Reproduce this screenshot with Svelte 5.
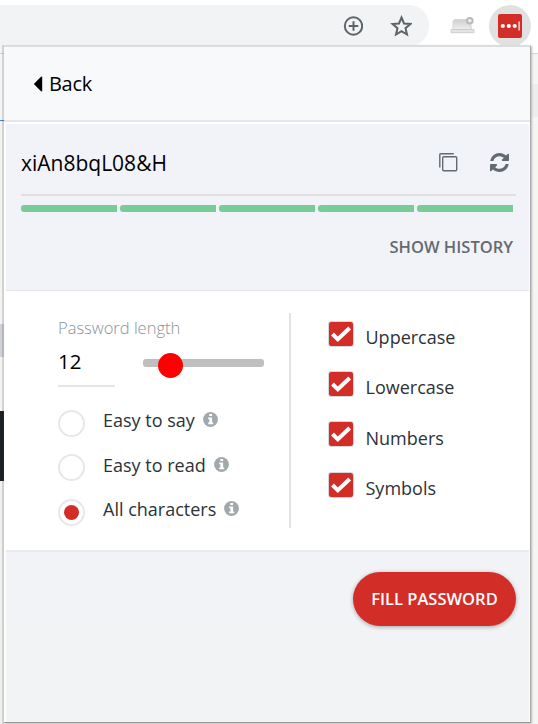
<script>
  const strength = [1, 2, 3, 4, 5];
  const modes = [
    { label: 'Easy to say', width: 92 },
    { label: 'Easy to read', width: 103 },
    { label: 'All characters', width: 113 }
  ];
  const sets = ['Uppercase', 'Lowercase', 'Numbers', 'Symbols'];
  let mode = $state('All characters');
  let enabled = $state([true, true, true, true]);
</script>

<div class="page">
  <div class="toolbar">
    <div class="address">
      <svg class="plus" width="20" height="20" viewBox="0 0 20 20" fill="none" stroke="#5f6368" stroke-width="2"><circle cx="10.500" cy="10" r="8.700"/><path d="M10.500 5.200v9.600M5.700 10h9.600"/></svg>
      <svg class="star" width="22" height="22" viewBox="0 0 22 22" fill="none" stroke="#5f6368" stroke-width="2"><path d="M11.500 2.500l2.500 6 6.400.5-4.900 4.200 1.500 6.300-5.500-3.400L6 19.500l1.500-6.300L2.600 9l6.400-.5z"/></svg>
    </div>
    <svg class="laptop" width="25" height="20" viewBox="0 0 25 20">
      <defs><linearGradient id="lid" x2="0" y2="1"><stop stop-color="#cfcfcf"/><stop offset="1" stop-color="#eee"/></linearGradient></defs>
      <path d="M4.500 3.500h15.500l1.500 10H3V5z" fill="url(#lid)" stroke="#d6d6d6"/>
      <path d="M1 13.500h23v3.200H1z" fill="#e4e4e4" stroke="#c8c8c8" stroke-width=".8"/>
      <circle cx="19.800" cy="4.800" r="2.800" fill="#eee" stroke="#b9b9b9" stroke-width="2"/>
    </svg>
    <div class="extension">
      <svg width="24" height="24" viewBox="0 0 24 24"><rect width="24" height="24" rx="2" fill="#d32d27"/><g fill="#fff"><circle cx="4.800" cy="12" r="2.100"/><circle cx="10.800" cy="12" r="2.100"/><circle cx="16.700" cy="12" r="2.100"/><rect x="20.500" y="7.500" width="1.200" height="9"/></g></svg>
    </div>
  </div>
  <div class="below">
    <div class="left"></div>
    <div class="popup">
      <header>
        <svg width="9" height="16" viewBox="0 0 9 16"><path d="M8.200 .6v14.800L7 15.300.3 8.500v-1L7 .7z" fill="#000"/></svg>
        <span>Back</span>
      </header>
      <section class="generator">
        <div class="password">
          <span class="value">xiAn8bqL08&amp;H</span>
          <svg class="copy" width="19" height="19" viewBox="0 0 19 19" fill="none" stroke="#626b70" stroke-width="1.400"><rect x="3.700" y="3.700" width="14" height="14" rx="1"/><path d="M.8 14.500V1.600Q.8.8 1.600.8h13.200"/></svg>
          <svg class="refresh" width="19" height="19" viewBox="0 0 1536 1536" fill="#626b70"><path d="M1511 928q0 5-1 7-64 268-268 434.500T764 1536q-146 0-282.500-55T238 1324l-129 129q-19 19-45 19t-45-19-19-45V960q0-26 19-45t45-19h448q26 0 45 19t19 45-19 45l-137 137q71 66 161 102t187 36q134 0 250-65t186-179q11-17 53-117 8-23 30-23h192q13 0 22.500 9.500t9.500 22.500zM1536 128v448q0 26-19 45t-45 19h-448q-26 0-45-19t-19-45 19-45l138-138Q969 256 768 256q-134 0-250 65T332 500q-11 17-53 117-8 23-30 23H50q-13 0-22.500-9.500T18 608v-7q65-268 270-434.500T768 0q146 0 284 55.500T1297 212l130-129q19-19 45-19t45 19 19 45z"/></svg>
        </div>
        <div class="strength">{#each strength as n (n)}<i></i>{/each}</div>
        <div class="history">SHOW HISTORY</div>
      </section>
      <section class="options">
        <div class="length-modes">
          <div class="caption">Password length</div>
          <div class="length">
            <div class="number"><span>12</span></div>
            <div class="slider"><div class="knob"></div></div>
          </div>
          <div class="modes">
            {#each modes as m (m.label)}
              <div class="mode">
                <button aria-label={m.label} class="radio" class:selected={mode === m.label} onclick={() => (mode = m.label)}></button>
                <span style:width="{m.width}px">{m.label}</span>
                <svg width="15" height="15" viewBox="0 0 15 15"><circle cx="7.500" cy="7.500" r="7.400" fill="#a1a9ad"/><path d="M6.300 2h2.800v2.100H6.300zM5.200 5.400h3.900v5h1.100v1.900h-5v-1.900h1.200V7.300H5.200z" fill="#fff"/></svg>
              </div>
            {/each}
          </div>
        </div>
        <div class="sets">
          {#each sets as s, i (s)}
            <div class="set">
              <button aria-label={s} class="check" onclick={() => (enabled[i] = !enabled[i])}>
                {#if enabled[i]}<svg width="24" height="24" viewBox="0 0 24 24"><rect width="24" height="24" rx="2" fill="#d32d27"/><path d="M3.500 12l5.300 5.300L20.700 6" fill="none" stroke="#fff" stroke-width="4"/></svg>{/if}
              </button>
              <span>{s}</span>
            </div>
          {/each}
        </div>
      </section>
      <footer><button class="fill">FILL PASSWORD</button></footer>
    </div>
    <div class="right"></div>
  </div>
</div>

<style>
  :global(body) { background: #fff; }
  * { box-sizing: border-box; }
  button { padding: 0; font: inherit; }
  svg { display: block; flex: none; }
  .page { width: 538px; height: 724px; overflow: hidden; font-family: "Open Sans", sans-serif; display: flex; flex-direction: column; background: #fff; }
  .toolbar { height: 45px; flex: none; display: flex; align-items: flex-start; padding-top: 5px; }
  .address { width: 429px; height: 41px; background: #f1f3f4; border-radius: 0 20px 20px 0; display: flex; padding: 11px 0 0 343px; gap: 27px; }
  .star { margin-top: -1px; }
  .laptop { margin: 11px 0 0 20.500px; }
  .extension { width: 42px; height: 42px; margin-left: 14.500px; border-radius: 50%; background: #e1e1e1; display: grid; place-items: center; padding-bottom: 1px; }
  .below { display: flex; height: 679px; }
  .left { width: 4px; flex: none; background: linear-gradient(90deg, transparent 50%, #0002 50%), linear-gradient(#f1f3f4 0 8px, #d5d5d5 8px 9px, #f5f5f5 9px 75px, #3b87cb 75px 76px, #f3f3f1 76px 279px, #ced1d8 279px 312px, #f3f3f1 312px 366px, #1c2127 366px 436px, #f0f0ef 436px); }
  .popup { position: relative; width: 527px; height: 678px; flex: none; background: #fff; border-top: 2px solid #dcddde; border-right: 1px solid #a9a9a9; border-bottom: 1px solid #969696; box-shadow: 1px 1px 2px #bbb; display: flex; flex-direction: column; }
  .right { flex: 1; background: linear-gradient(#fff 0 8px, #d5d5d5 8px 9px, #f5f5f4 9px 39px, #ededed 39px 72px, #f5f5f4 72px); }
  header { height: 75px; flex: none; background: #f8f9fb; border-bottom: 2px solid #e5e6e8; display: flex; align-items: center; padding: 0 0 0 30px; gap: 6px; font-size: 20px; letter-spacing: -.3px; color: #000; }
  .generator { height: 167px; margin: 2px 1px 0 2px; background: #f2f3f8; border-bottom: 1px solid #e5e6e8; padding: 0 13px 0 15px; flex: none; }
  .password { height: 72px; border-bottom: 2px solid #e0e0e0; display: flex; align-items: center; padding: 8px 7px 0 0; }
  .value { font-size: 21px; color: #000; flex: 1; }
  .copy { margin: -1px 32px 0 0; }
  .refresh { margin-top: -2px; }
  .strength { display: flex; gap: 3px; margin: 9px 0 0; width: 492px; }
  .strength i { flex: 1; height: 7px; background: #78cc96; border-radius: 3px 0 0 3px; }
  .history { text-align: right; padding-right: 3px; margin-top: 21px; font-size: 16.500px; line-height: 28px; font-weight: 600; color: #626b70; }
  .options { height: 259px; flex: none; display: flex; padding: 22px 0 0 54px; color: #2b3338; font-size: 18px; }
  .length-modes { width: 233px; height: 215px; border-right: 2px solid #e3e3e5; }
  .caption { height: 30px; line-height: 30px; font-size: 16.500px; color: #899298; font-weight: 300; }
  .length { display: flex; height: 44px; }
  .number { width: 57px; height: 44px; border-bottom: 2px solid #e5e5e5; color: #000; font-size: 20.500px; line-height: 36px; }
  .slider { width: 121px; height: 8px; border-radius: 3px; background: #bfbfbf; margin: 16px 0 0 28px; }
  .knob { width: 25px; height: 25px; border-radius: 50%; background: red; margin-left: 14.500px; position: relative; top: -6.500px; }
  .modes { padding-top: 23px; }
  .mode { display: flex; height: 44.400px; align-items: flex-start; }
  .mode span { margin: -2.900px 0 0 18px; line-height: 26.400px; white-space: nowrap; }
  .mode svg { margin: 2.200px 0 0 8px; }
  .radio { width: 27px; height: 27px; flex: none; border: 2px solid #e7e7e7; border-radius: 50%; background: #fff; display: grid; place-items: center; }
  .radio.selected::after { content: ''; width: 15px; height: 15px; border-radius: 50%; background: #d32d27; }
  .sets { padding: 7px 0 0 37px; }
  .set { height: 50.400px; display: flex; }
  .check { width: 26px; height: 26px; margin-top: .5px; border: 1px solid #d5d9dc; border-radius: 3px; background: #fff; }
  .set span { margin: 4px 0 0 11.500px; line-height: 26px; }
  footer { flex: 1; margin: 0 1px 0 2px; border-top: 2px solid #e9eaec; background: linear-gradient(#f2f3f8, #f2f3f5 60%); display: flex; justify-content: flex-end; padding: 20px 13px 0 0; }
  .fill { width: 163px; height: 54px; padding-bottom: 2px; border: 0; border-radius: 27px; background: #d32d27; color: #fff; font-size: 16.500px; font-weight: 600; box-shadow: 0 1px 4px #0005; }
</style>
